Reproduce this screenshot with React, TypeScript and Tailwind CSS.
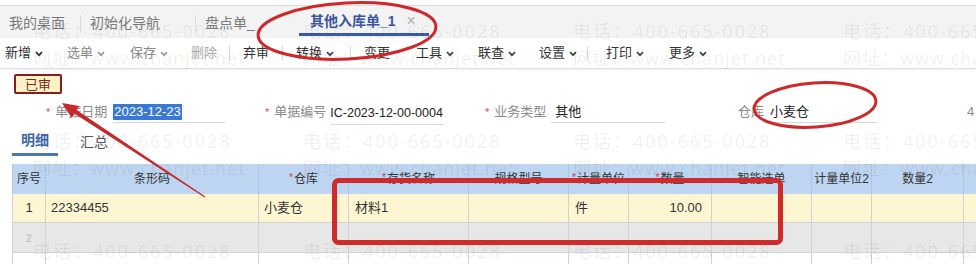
import React from "react";

const Chevron = ({ c = "#444" }: { c?: string }) => (
  <svg width="8" height="6" viewBox="0 0 8 6" className="ml-[4px] mt-[1px]">
    <polyline points="1,1.2 4,4.2 7,1.2" fill="none" stroke={c} strokeWidth="1.7" />
  </svg>
);

const Sep = ({ cls }: { cls: string }) => <span className={cls} />;

const wmCols = [33, 303, 573, 843];
const wmRows = [22, 132, 242];

export default function App() {
  return (
    <div className="relative w-[976px] h-[264px] overflow-hidden bg-white font-['Liberation_Sans','Noto_Sans_CJK_SC',sans-serif] text-[#333]">
      {/* top strip */}
      <div className="h-[5px] bg-white" />
      {/* tab bar */}
      <div className="h-[33px] bg-[#f3f3f3] border-t border-[#dcdcdc] flex items-stretch text-[14px] text-[#7a7a7a]">
        <div className="flex items-center pl-[9px] pt-[3px] w-[80px]">我的桌面</div>
        <Sep cls="w-px h-[18px] bg-[#dadada] self-center mt-[3px]" />
        <div className="flex items-center pl-[9px] pt-[3px] w-[114px]">初始化导航</div>
        <Sep cls="w-px h-[18px] bg-[#dadada] self-center mt-[3px]" />
        <div className="flex items-center pl-[9px] pt-[3px] w-[102px]">盘点单_</div>
        <div className="flex items-center pl-[11px] pt-[3px] w-[130px] border-b-[3px] border-[#3b5aa6] mb-[2px] ml-[1px]">
          <span className="font-bold text-[#3a56a0]">其他入库单_1</span>
          <span className="ml-[11px] text-[#b0b0b0] text-[16px] leading-none">×</span>
        </div>
      </div>
      {/* toolbar */}
      <div className="h-[31px] border-b border-[#dedede] shadow-[0_1px_2px_rgba(0,0,0,0.06)] flex items-center text-[13px] whitespace-nowrap">
        <div className="flex items-center pl-[5px] w-[67px]">新增<Chevron c="#333" /></div>
        <div className="flex items-center w-[63px] text-[#888]">选单<Chevron c="#999" /></div>
        <div className="flex items-center w-[61px] text-[#888]">保存<Chevron c="#999" /></div>
        <div className="flex items-center w-[38px] text-[#aaa]">删除</div>
        <Sep cls="w-px h-[14px] bg-[#d8d8d8]" />
        <div className="flex items-center pl-[13px] w-[52px]">弃审</div>
        <Sep cls="w-px h-[14px] bg-[#d8d8d8]" />
        <div className="flex items-center pl-[13px] w-[67px]">转换<Chevron /></div>
        <Sep cls="w-px h-[14px] bg-[#d8d8d8]" />
        <div className="flex items-center pl-[13px] w-[65px]">变更</div>
        <div className="flex items-center w-[62px]">工具<Chevron /></div>
        <div className="flex items-center w-[61px]">联查<Chevron /></div>
        <div className="flex items-center w-[48px]">设置<Chevron /></div>
        <Sep cls="w-px h-[14px] bg-[#d8d8d8]" />
        <div className="flex items-center pl-[18px] w-[81px]">打印<Chevron /></div>
        <div className="flex items-center">更多<Chevron /></div>
      </div>

      {/* status badge */}
      <div className="mt-[5px] ml-[14px] w-[48px] h-[20px] border-2 border-[#8a1c1c] rounded-[2px] bg-[#fdf1c6] flex items-center justify-center text-[13px] text-[#7a2a1a] leading-none">
        已审
      </div>

      {/* form row */}
      <div className="mt-[5px] h-[26px] flex items-center text-[13px] whitespace-nowrap">
        <div className="flex items-center w-[265px] pl-[46px] shrink-0">
          <span className="text-[#e05050] text-[11px] mr-[5px]">*</span>
          <span className="text-[#8a8a8a]">单据日期</span>
          <div className="ml-[6px] w-[112px] h-[22px] border-b border-[#d9d9d9] flex items-center">
            <span className="bg-[#3779d4] text-white px-[1px] leading-[16px] font-medium">2023-12-23</span>
          </div>
        </div>
        <div className="flex items-center w-[220px] shrink-0">
          <span className="text-[#e05050] text-[11px] mr-[5px]">*</span>
          <span className="text-[#8a8a8a]">单据编号</span>
          <div className="ml-[4px] w-[114px] h-[26px] border-b border-[#d9d9d9] flex items-center pt-[4px]">
            <span className="text-[#222] text-[12.5px]">IC-2023-12-00-0004</span>
          </div>
        </div>
        <div className="flex items-center w-[253px] shrink-0">
          <span className="text-[#e05050] text-[11px] mr-[5px]">*</span>
          <span className="text-[#8a8a8a]">业务类型</span>
          <div className="ml-[5px] w-[114px] h-[22px] border-b border-[#d9d9d9] flex items-center pl-[4px]">
            <span className="text-[#222]">其他</span>
          </div>
        </div>
        <div className="flex items-center w-[229px] shrink-0">
          <span className="text-[#8a8a8a]">仓库</span>
          <div className="ml-[3px] w-[110px] h-[22px] border-b border-[#d9d9d9] flex items-center pl-[3px]">
            <span className="text-[#222]">小麦仓</span>
          </div>
        </div>
        <span className="text-[#8a8a8a]">4</span>
      </div>

      {/* sub tabs */}
      <div className="mt-[3px] h-[28px] flex items-stretch text-[14px]">
        <div className="ml-[12px] w-[46px] border-b-[3px] border-[#4a78b0] flex items-center justify-center font-bold text-[#3b69a8]">明细</div>
        <div className="ml-[22px] flex items-center text-[#555]">汇总</div>
      </div>

      {/* table */}
      <div className="mt-[8px] ml-[12px] grid grid-cols-[34px_213px_90px_120px_100px_60px_83px_100px_60px_92px_40px] text-[13px] whitespace-nowrap">
        {[
          ["序号", false],
          ["条形码", false],
          ["仓库", true],
          ["存货名称", true],
          ["规格型号", false],
          ["计量单位", true],
          ["数量", true],
          ["智能选单", false],
          ["计量单位2", false],
          ["数量2", false],
          ["", false],
        ].map(([t, star], i) => (
          <div
            key={"h" + i}
            className={
              "h-[30px] bg-[#bed5f1] border-r border-[#adc6e6] flex items-center justify-center text-[12px] text-[#333] overflow-hidden" +
              (i === 0 ? " border-l" : "")
            }
          >
            {star ? <span className="text-[#d04040] text-[10px] mr-[1px] -mt-[4px]">*</span> : null}
            {t as string}
          </div>
        ))}
        {/* row 1 */}
        <div className="h-[29px] bg-[#fef6d3] border-l border-r border-b border-[#d2d2d2] flex items-center justify-center">1</div>
        <div className="h-[29px] bg-[#fef6d3] border-r border-b border-[#d2d2d2] flex items-center pl-[5px]">22334455</div>
        <div className="h-[29px] bg-[#fef6d3] border-r border-b border-[#d2d2d2] flex items-center pl-[5px]">小麦仓</div>
        <div className="h-[29px] bg-[#fef6d3] border-r border-b border-[#d2d2d2] flex items-center pl-[6px]">材料1</div>
        <div className="h-[29px] bg-[#fef6d3] border-r border-b border-[#d2d2d2]" />
        <div className="h-[29px] bg-[#fef6d3] border-r border-b border-[#d2d2d2] flex items-center pl-[6px]">件</div>
        <div className="h-[29px] bg-[#fef6d3] border-r border-b border-[#d2d2d2] flex items-center justify-end pr-[9px]">10.00</div>
        <div className="h-[29px] bg-[#fef6d3] border-r border-b border-[#d2d2d2]" />
        <div className="h-[29px] bg-[#fef6d3] border-r border-b border-[#d2d2d2]" />
        <div className="h-[29px] bg-[#fef6d3] border-r border-b border-[#d2d2d2]" />
        <div className="h-[29px] bg-[#fef6d3] border-r border-b border-[#d2d2d2]" />
        {/* row 2 */}
        <div className="h-[30px] bg-[#e7e7e7] border-l border-r border-b border-[#d2d2d2] text-[10px] text-[#b5b5b5] pl-[13px] pt-[8px]">2</div>
        {Array.from({ length: 10 }).map((_, i) => (
          <div key={"r2" + i} className="h-[30px] bg-[#e7e7e7] border-r border-b border-[#d2d2d2]" />
        ))}
        {/* row 3 */}
        <div className="h-[30px] bg-white border-l border-r border-[#d2d2d2] text-[10px] text-[#b5b5b5] pl-[13px] pt-[8px]">3</div>
        {Array.from({ length: 10 }).map((_, i) => (
          <div key={"r3" + i} className="h-[30px] bg-white border-r border-[#d2d2d2]" />
        ))}
      </div>

      {/* watermark */}
      {wmRows.map((y) =>
        wmCols.map((x) => (
          <React.Fragment key={x + "-" + y}>
            <div
              className="absolute pointer-events-none whitespace-nowrap text-[18px] tracking-[2px] text-black/[0.07] font-['Open_Sans','Noto_Sans_CJK_SC',sans-serif] leading-none"
              style={{ left: x, top: y }}
            >
              电话：400-665-0028
            </div>
            <div
              className="absolute pointer-events-none whitespace-nowrap text-[18px] tracking-[1px] text-black/[0.07] font-['Open_Sans','Noto_Sans_CJK_SC',sans-serif] leading-none"
              style={{ left: x, top: y + 27 }}
            >
              网址：www.chanjet.net
            </div>
          </React.Fragment>
        ))
      )}

      {/* annotations */}
      <svg className="absolute left-0 top-0 pointer-events-none" width="976" height="264" viewBox="0 0 976 264">
        <ellipse cx="347" cy="31" rx="89" ry="28" fill="none" stroke="#d0272a" strokeWidth="3" transform="rotate(-3 347 31)" />
        <ellipse cx="815" cy="105" rx="61" ry="22" fill="none" stroke="#cc2a2a" strokeWidth="3" transform="rotate(-4 815 105)" />
        <rect x="334.5" y="180.5" width="446" height="62" rx="4" fill="none" stroke="#d12a2a" strokeWidth="5" />
        <path
          d="M62,103 L79.25,105.95 L76.5,110.1 L205.3,196.6 L204.7,197.4 L74.3,113.5 L71.55,117.65 Z"
          fill="#c9282a"
        />
      </svg>
    </div>
  );
}
